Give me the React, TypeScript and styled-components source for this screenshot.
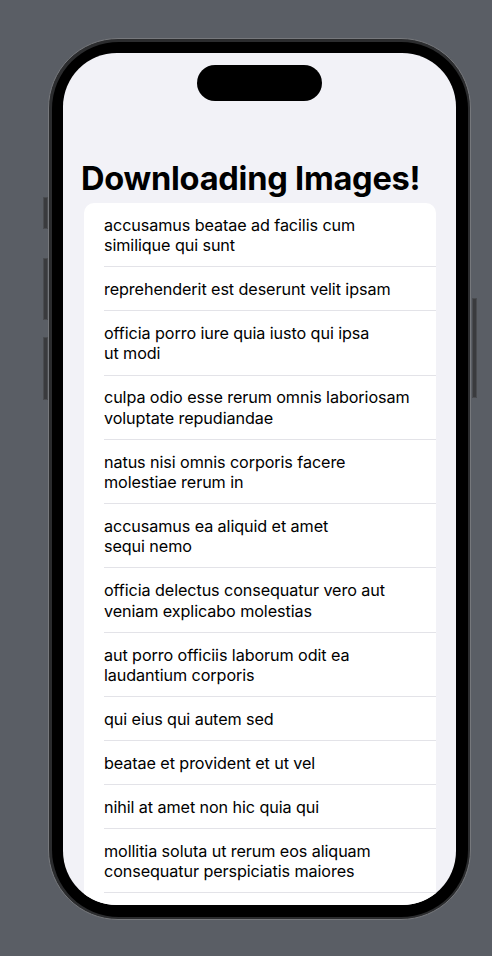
import React from "react";
import styled, { createGlobalStyle } from "styled-components";

const Global = createGlobalStyle`
  html, body { margin: 0; padding: 0; }
  body {
    background: #5a5e65;
    width: 492px;
    height: 956px;
    overflow: hidden;
    font-family: Inter, "Noto Sans", "Liberation Sans", sans-serif;
    -webkit-font-smoothing: antialiased;
  }
`;

const Stage = styled.div`
  display: flex;
  padding: 38px 0 0 48px;
`;

const Phone = styled.div`
  position: relative;
  display: flex;
  width: 423px;
  height: 882px;
  box-sizing: border-box;
  border-radius: 70px;
  background: #2b2c2e;
  border: 1.5px solid #76787c;
  padding: 2.5px;
`;

const SideButton = styled.div<{ $side: "left" | "right"; $top: number; $h: number }>`
  position: absolute;
  top: ${(p) => p.$top}px;
  ${(p) => (p.$side === "left" ? "left: -6px;" : "right: -7px;")}
  width: 5px;
  height: ${(p) => p.$h}px;
  background: #3a3b3e;
  border-radius: 1.5px;
  box-shadow: inset 0 0 0 1px #4a4c50;
`;

const Bezel = styled.div`
  flex: 1;
  display: flex;
  border-radius: 67px;
  background: #000;
  padding: 11.5px;
`;

const Screen = styled.div`
  flex: 1;
  border-radius: 54px;
  overflow: hidden;
  background: #f2f2f7;
  display: flex;
  flex-direction: column;
  padding-top: 12px;
`;

const Island = styled.div`
  flex: none;
  align-self: center;
  width: 125px;
  height: 36px;
  border-radius: 18px;
  background: #000;
`;

const Title = styled.h1`
  margin: 57px 0 0 18px;
  font-size: 32.6px;
  line-height: 40px;
  font-weight: 700;
  letter-spacing: -0.25px;
  color: #000;
  white-space: nowrap;
`;

const Card = styled.ul`
  flex: none;
  list-style: none;
  margin: 5px 20px 0 21px;
  padding: 0 0 40px;
  background: #fff;
  border-radius: 10px;
`;

const Row = styled.li`
  position: relative;
  padding: 11.75px 20px;
  font-size: 16.2px;
  line-height: 20.4px;
  color: #000;
  letter-spacing: -0.1px;
  white-space: nowrap;
  &::after {
    content: "";
    position: absolute;
    left: 20px;
    right: 0;
    bottom: 0;
    height: 1px;
    background: #e3e3e8;
  }
`;

const rows: string[][] = [
  ["accusamus beatae ad facilis cum", "similique qui sunt"],
  ["reprehenderit est deserunt velit ipsam"],
  ["officia porro iure quia iusto qui ipsa", "ut modi"],
  ["culpa odio esse rerum omnis laboriosam", "voluptate repudiandae"],
  ["natus nisi omnis corporis facere", "molestiae rerum in"],
  ["accusamus ea aliquid et amet", "sequi nemo"],
  ["officia delectus consequatur vero aut", "veniam explicabo molestias"],
  ["aut porro officiis laborum odit ea", "laudantium corporis"],
  ["qui eius qui autem sed"],
  ["beatae et provident et ut vel"],
  ["nihil at amet non hic quia qui"],
  ["mollitia soluta ut rerum eos aliquam", "consequatur perspiciatis maiores"],
];

export default function App() {
  return (
    <>
      <Global />
      <Stage>
        <Phone>
          <SideButton $side="left" $top={158} $h={32} />
          <SideButton $side="left" $top={219} $h={62} />
          <SideButton $side="left" $top={298} $h={63} />
          <SideButton $side="right" $top={259} $h={100} />
          <Bezel>
            <Screen>
              <Island />
              <Title>Downloading Images!</Title>
              <Card>
                {rows.map((lines, i) => (
                  <Row key={i}>
                    {lines.map((l, j) => (
                      <React.Fragment key={j}>
                        {j > 0 && <br />}
                        {l}
                      </React.Fragment>
                    ))}
                  </Row>
                ))}
              </Card>
            </Screen>
          </Bezel>
        </Phone>
      </Stage>
    </>
  );
}
